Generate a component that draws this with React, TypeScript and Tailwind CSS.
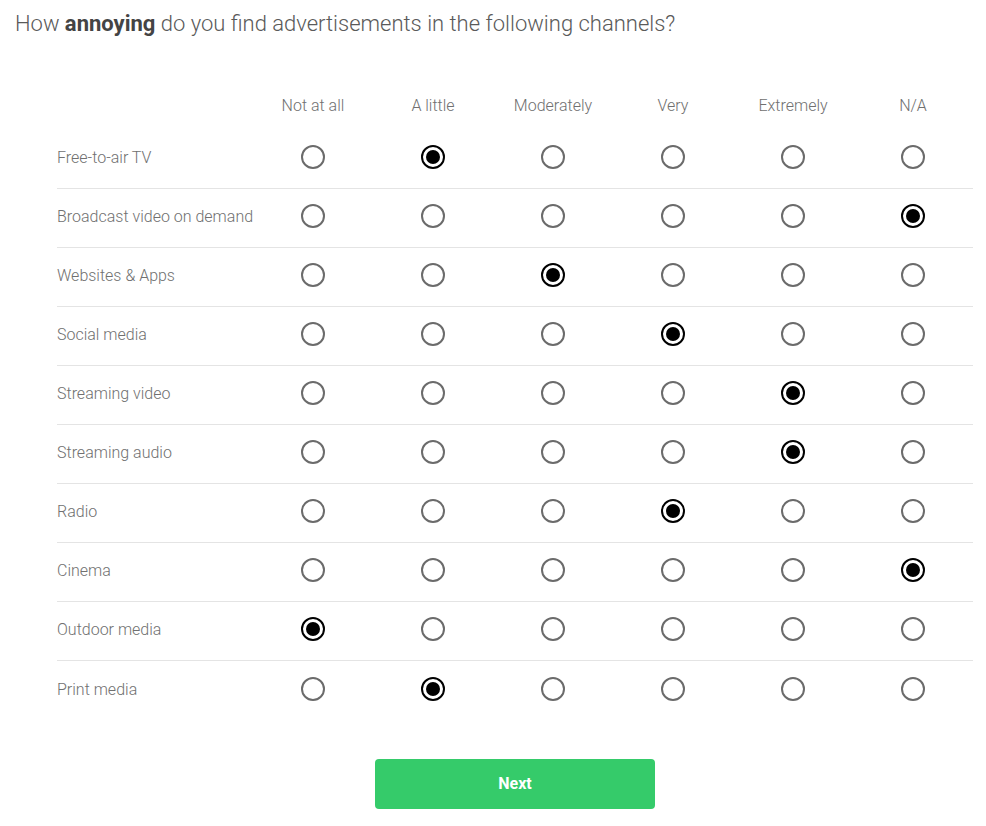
import React from "react";

const cols = ["Not at all", "A little", "Moderately", "Very", "Extremely", "N/A"];
const rows: [string, number][] = [
  ["Free-to-air TV", 1],
  ["Broadcast video on demand", 5],
  ["Websites & Apps", 2],
  ["Social media", 3],
  ["Streaming video", 4],
  ["Streaming audio", 4],
  ["Radio", 3],
  ["Cinema", 5],
  ["Outdoor media", 0],
  ["Print media", 1],
];

function Radio({ checked }: { checked: boolean }) {
  return checked ? (
    <span className="flex h-6 w-6 items-center justify-center rounded-full border-2 border-black bg-white">
      <span className="h-[14px] w-[14px] rounded-full bg-black" />
    </span>
  ) : (
    <span className="block h-6 w-6 rounded-full border-2 border-[#6b6b6b] bg-white" />
  );
}

export default function App() {
  return (
    <div className="min-h-[826px] bg-white pt-[10px] font-['Roboto_Light','Roboto',sans-serif] font-light">
      <h1 className="pl-[15px] text-[22px] leading-[28px] text-[#5a5a5a]">
        How <span className="font-['Roboto',sans-serif] font-bold text-[#444]">annoying</span> do you find advertisements in the following channels?
      </h1>
      <div className="ml-[57px] mt-[42px] w-[916px]">
        <div className="flex h-[50px] items-center pt-[2px] text-[16px] text-[#707070]">
          <div className="w-[196px]" />
          {cols.map((c) => (
            <div key={c} className="w-[120px] whitespace-nowrap text-center">
              {c}
            </div>
          ))}
        </div>
        {rows.map(([label, sel], i) => (
          <div
            key={label}
            className={`flex h-[59px] items-center pb-1 ${i < rows.length - 1 ? "border-b border-[#e4e4e4]" : ""}`}
          >
            <div className="w-[196px] whitespace-nowrap pt-[2px] text-[16px] text-[#707070]">{label}</div>
            {cols.map((c, j) => (
              <div key={c} className="flex w-[120px] justify-center">
                <Radio checked={j === sel} />
              </div>
            ))}
          </div>
        ))}
      </div>
      <div className="ml-[57px] mt-[39px] flex w-[916px] justify-center">
        <button className="h-[50px] w-[280px] rounded-[4px] bg-[#35cb6a] font-['Roboto',sans-serif] text-[16px] font-bold text-white">
          Next
        </button>
      </div>
    </div>
  );
}
